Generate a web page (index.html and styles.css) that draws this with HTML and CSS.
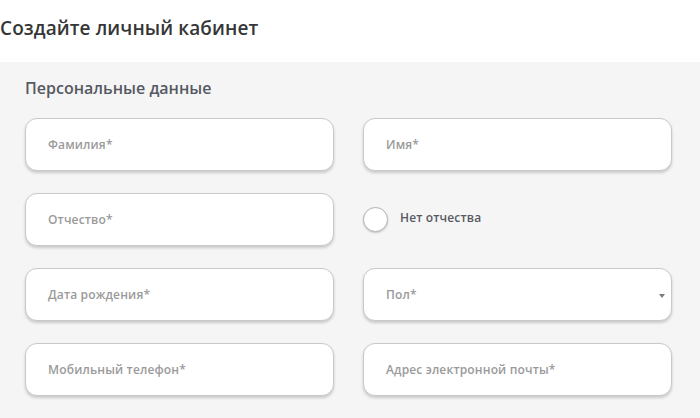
FILE: index.html
```html
<!DOCTYPE html>
<html lang="ru">
<head>
<meta charset="utf-8">
<link rel="stylesheet" href="styles.css">
</head>
<body>
<header class="top">
  <h1 class="title">Создайте личный кабинет</h1>
</header>
<section class="panel">
  <h2 class="section-title">Персональные данные</h2>
  <div class="grid">
    <div class="field"><span class="ph">Фамилия*</span></div>
    <div class="field"><span class="ph">Имя*</span></div>
    <div class="field"><span class="ph">Отчество*</span></div>
    <label class="check"><span class="circle"></span><span class="check-label">Нет отчества</span></label>
    <div class="field"><span class="ph">Дата рождения*</span></div>
    <div class="field select"><span class="ph">Пол*</span><span class="arrow"></span></div>
    <div class="field"><span class="ph">Мобильный телефон*</span></div>
    <div class="field"><span class="ph">Адрес электронной почты*</span></div>
  </div>
</section>
</body>
</html>
```
FILE: styles.css
```css
html, body {
  margin: 0;
  padding: 0;
  background: #f5f5f5;
  font-family: "Open Sans", "Noto Sans", sans-serif;
}
.top {
  background: #ffffff;
  height: 62px;
  display: flex;
  align-items: center;
}
.title {
  margin: 0 0 7px 0;
  font-size: 19px;
  font-weight: 600;
  color: #363636;
  letter-spacing: 0.1px;
}
.panel {
  background: #f5f5f5;
  padding: 16px 28px 20px 25px;
}
.section-title {
  margin: 0 0 20px 0;
  font-size: 16px;
  font-weight: 600;
  color: #555962;
  line-height: 20px;
}
.grid {
  display: grid;
  grid-template-columns: 309px 309px;
  column-gap: 29px;
  row-gap: 22px;
}
.field {
  height: 53px;
  box-sizing: border-box;
  background: #ffffff;
  border: 1px solid #c9c9c9;
  border-radius: 12px;
  box-shadow: 0 2px 3px rgba(0, 0, 0, 0.18);
  display: flex;
  align-items: center;
  padding: 0 22px;
  position: relative;
}
.ph {
  font-size: 12px;
  font-weight: 600;
  color: #9a9a9a;
  letter-spacing: 0.15px;
}
.select .arrow {
  position: absolute;
  right: 6px;
  top: 50%;
  margin-top: -1px;
  width: 0;
  height: 0;
  border-left: 3px solid transparent;
  border-right: 3px solid transparent;
  border-top: 4px solid #7a7a7a;
}
.check {
  display: flex;
  align-items: center;
  gap: 12px;
  height: 53px;
}
.circle {
  width: 25px;
  height: 25px;
  box-sizing: border-box;
  border-radius: 50%;
  background: #ffffff;
  border: 1px solid #b5b5b5;
  box-shadow: 0 1px 2px rgba(0, 0, 0, 0.2);
}
.check-label {
  font-size: 12px;
  font-weight: 600;
  color: #555962;
  margin-top: -4px;
  letter-spacing: 0.15px;
}
```
